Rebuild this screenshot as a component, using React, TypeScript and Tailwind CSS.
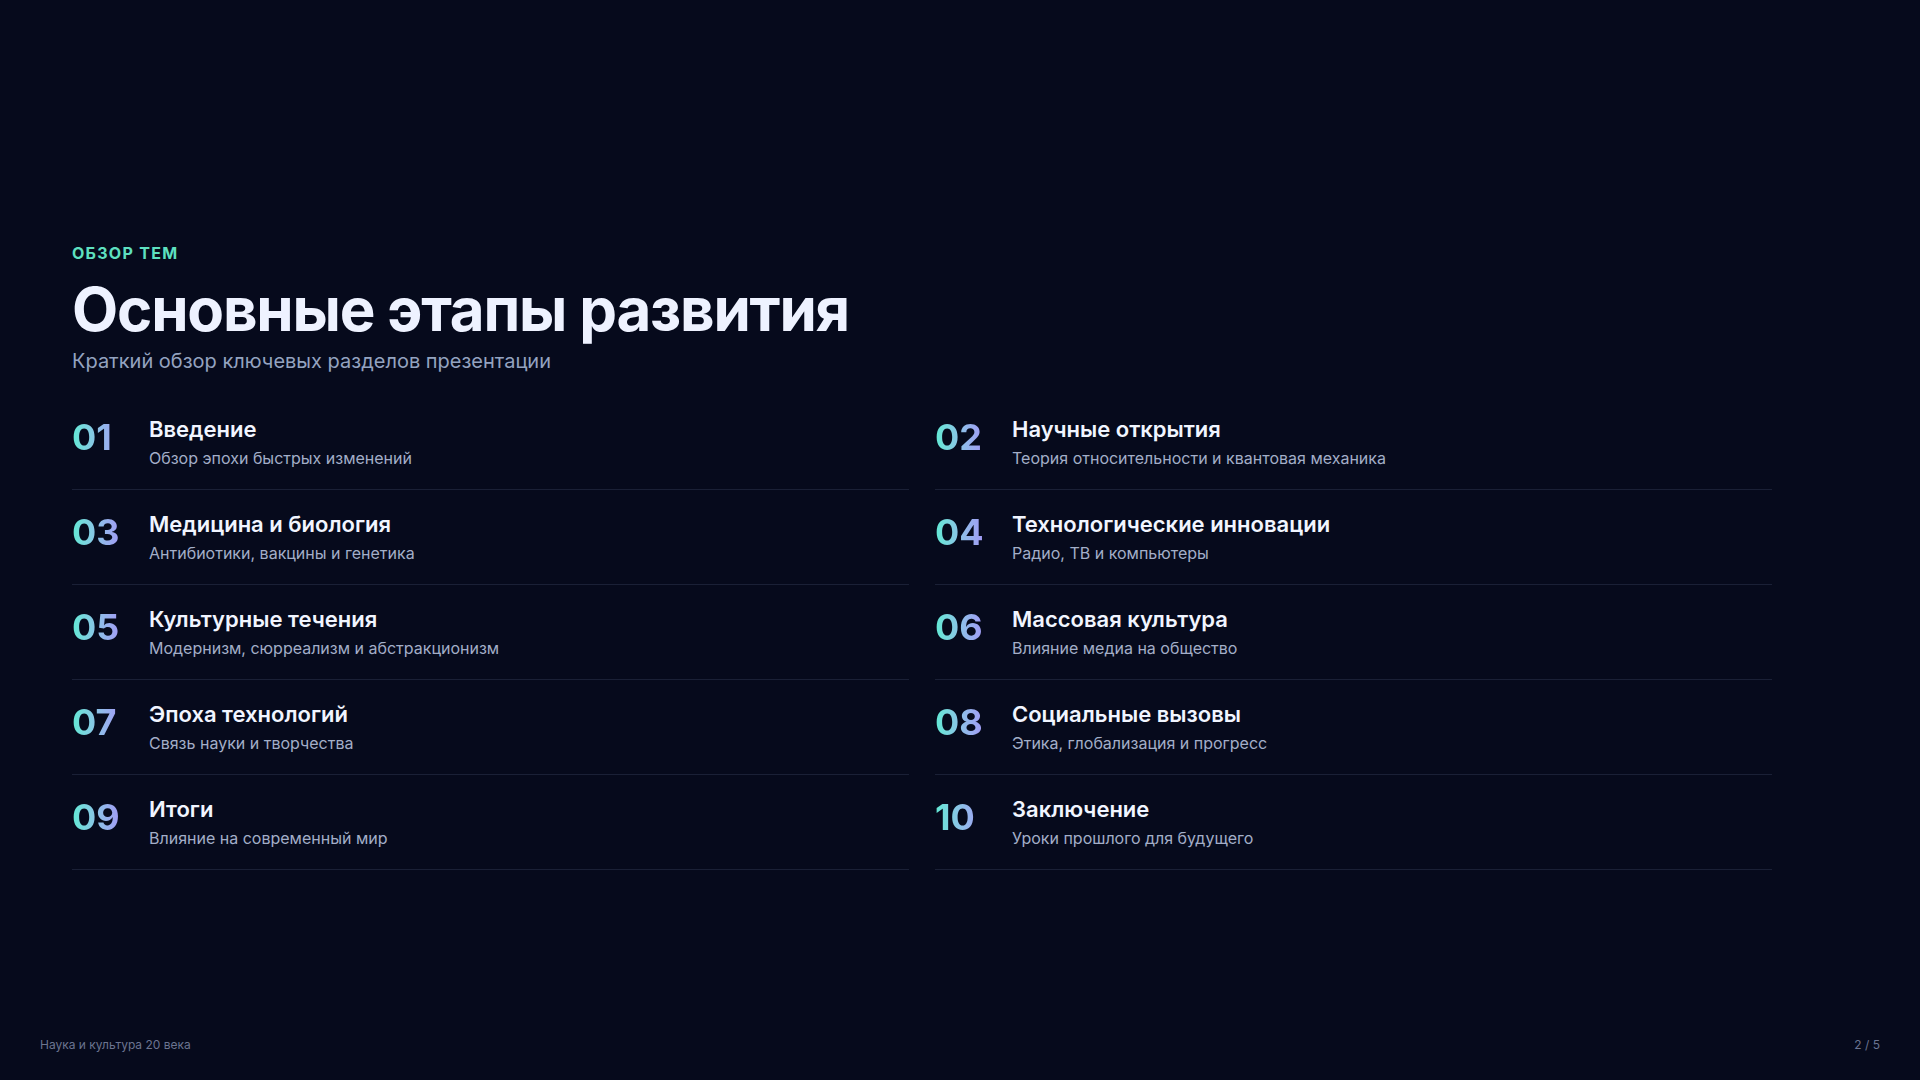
const items = [
  ["01", "Введение", "Обзор эпохи быстрых изменений"],
  ["02", "Научные открытия", "Теория относительности и квантовая механика"],
  ["03", "Медицина и биология", "Антибиотики, вакцины и генетика"],
  ["04", "Технологические инновации", "Радио, ТВ и компьютеры"],
  ["05", "Культурные течения", "Модернизм, сюрреализм и абстракционизм"],
  ["06", "Массовая культура", "Влияние медиа на общество"],
  ["07", "Эпоха технологий", "Связь науки и творчества"],
  ["08", "Социальные вызовы", "Этика, глобализация и прогресс"],
  ["09", "Итоги", "Влияние на современный мир"],
  ["10", "Заключение", "Уроки прошлого для будущего"],
];

export default function App() {
  return (
    <div
      className="h-screen w-full bg-[#060a1c] flex flex-col overflow-hidden"
      style={{ fontFamily: "Inter, 'Noto Sans', sans-serif" }}
    >
      <main className="flex-1 px-[72px] pt-[243px]">
        <div className="text-[16px] font-bold tracking-[0.08em] text-[#5ee0c0] leading-5">ОБЗОР ТЕМ</div>
        <h1 className="mt-[10px] text-[60px] font-bold tracking-[-0.02em] leading-[72px] text-[#eef2ff]">
          Основные этапы развития
        </h1>
        <p className="mt-[2px] text-[20px] text-[#94a3c0] leading-7">Краткий обзор ключевых разделов презентации</p>
        <div className="mt-[20px] grid grid-cols-2 gap-x-[26px] w-[1700px]">
          {items.map(([n, t, d]) => (
            <div key={n} className="flex gap-[21px] py-[20px] border-b border-[#1a2036]">
              <div className="w-[56px] text-[36px] font-bold leading-[44px] bg-gradient-to-r from-[#5eead4] to-[#a78bfa] bg-clip-text text-transparent">
                {n}
              </div>
              <div>
                <div className="text-[22px] font-semibold leading-[28px] text-[#f1f5ff]">{t}</div>
                <div className="mt-[4px] text-[16px] leading-[22px] text-[#a3aec8]">{d}</div>
              </div>
            </div>
          ))}
        </div>
      </main>
      <footer className="flex justify-between px-[40px] pb-[26px] text-[12px] text-[#6b7490]">
        <span>Наука и культура 20 века</span>
        <span>2 / 5</span>
      </footer>
    </div>
  );
}
